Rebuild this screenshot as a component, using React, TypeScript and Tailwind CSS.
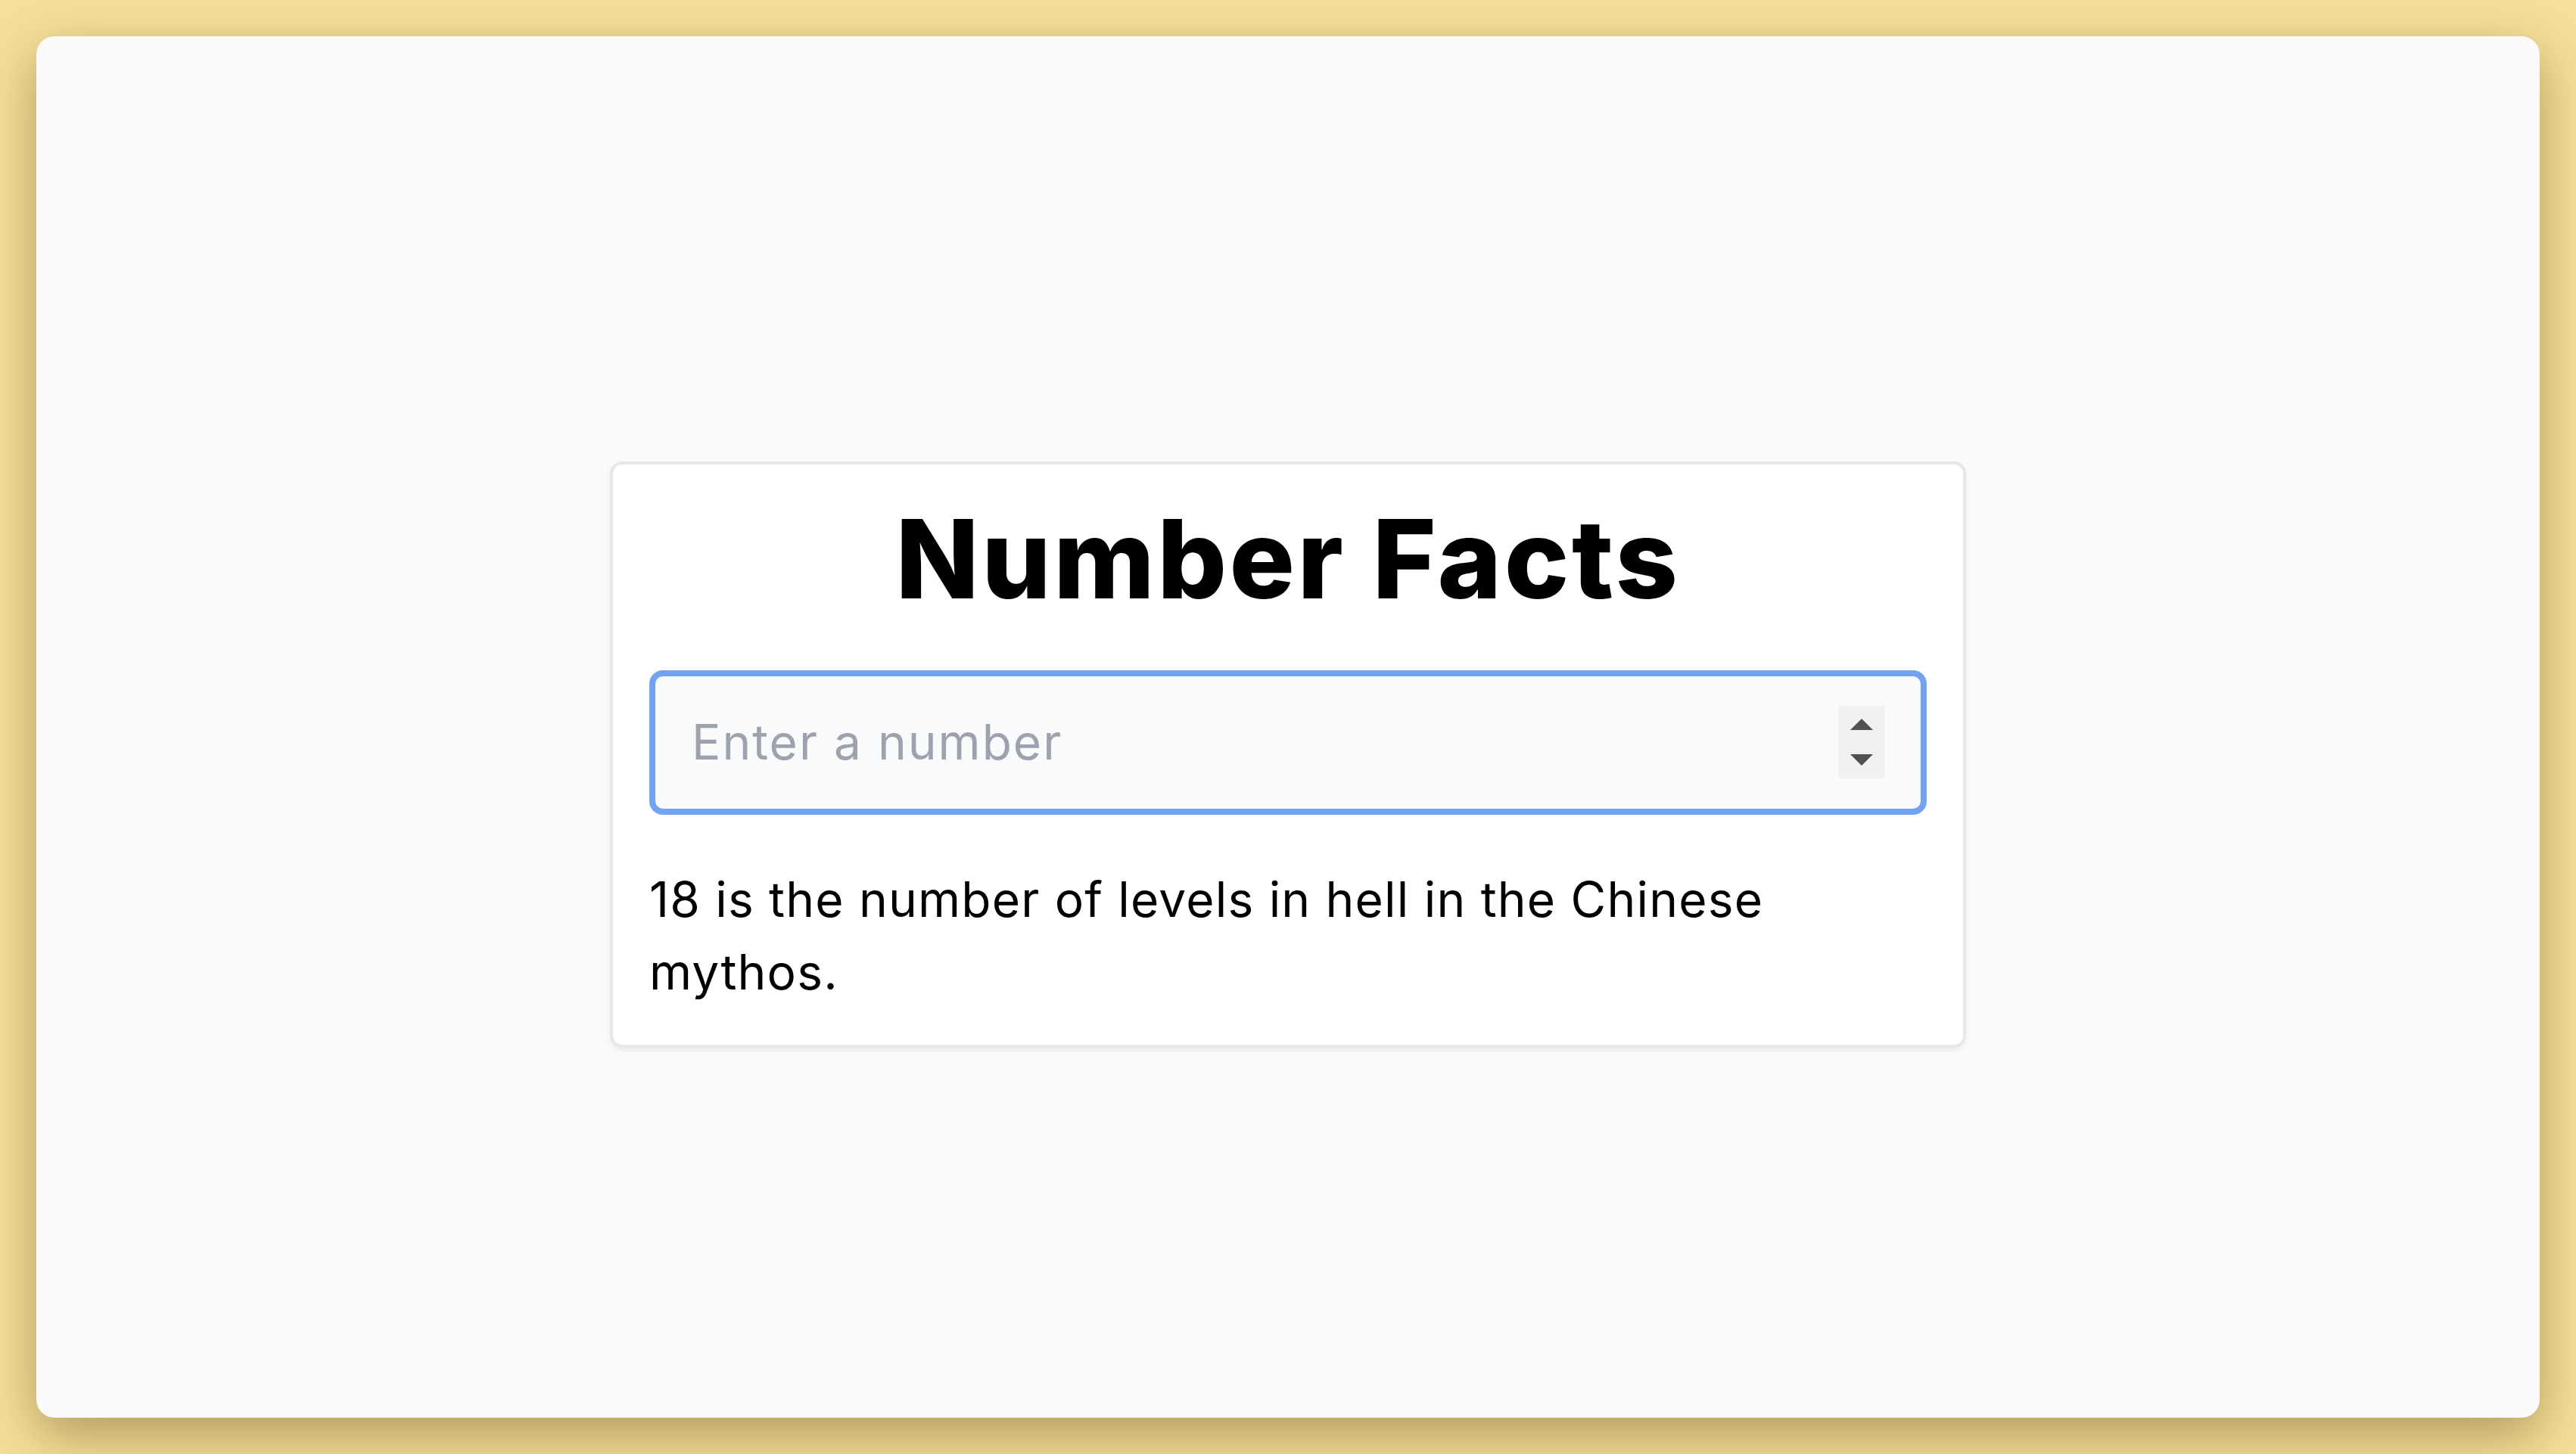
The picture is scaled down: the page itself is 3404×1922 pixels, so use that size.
import React from "react";

const SpinArrows: React.FC = () => {
  return (
    <div className="flex flex-col items-center justify-center gap-[32px] w-[60px] h-[96px] bg-[#f1f1f1] shrink-0">
      <svg width="30" height="15" viewBox="0 0 30 15">
        <polygon points="15,0 30,15 0,15" fill="#505050" />
      </svg>
      <svg width="30" height="15" viewBox="0 0 30 15">
        <polygon points="0,0 30,0 15,15" fill="#505050" />
      </svg>
    </div>
  );
};

const App: React.FC = () => {
  return (
    <div className="w-full h-[1922px] bg-[#f6df99] p-[48px] font-['Inter','Liberation_Sans',sans-serif]">
      <div className="w-full h-full bg-[#fafafa] rounded-[24px] shadow-[0_24px_70px_rgba(60,45,0,0.38)] flex items-center justify-center pt-[72px]">
        <div className="w-[1792px] bg-white border-4 border-[#e5e7eb] rounded-[16px] shadow-[0_4px_6px_rgba(0,0,0,0.06)] px-[48px] pt-[53px] pb-[48px]">
          <h1 className="text-[144px] leading-none font-extrabold text-black text-center tracking-[3.5px]">
            Number Facts
          </h1>
          <div className="mt-[75px] h-[191px] flex items-center border-8 border-[#72a3f3] rounded-[18px] bg-[#f9fafb] pl-[48px] pr-[48px]">
            <input
              type="number"
              autoFocus
              placeholder="Enter a number"
              className="flex-1 min-w-0 bg-transparent outline-none text-[64px] tracking-[2px] text-black placeholder:text-[#9ca3af] caret-black [appearance:textfield] [&::-webkit-inner-spin-button]:appearance-none [&::-webkit-outer-spin-button]:appearance-none"
            />
            <SpinArrows />
          </div>
          <p className="mt-[64px] text-[64px] leading-[96px] tracking-[1.2px] text-black">
            18 is the number of levels in hell in the Chinese mythos.
          </p>
        </div>
      </div>
    </div>
  );
};

export default App;
